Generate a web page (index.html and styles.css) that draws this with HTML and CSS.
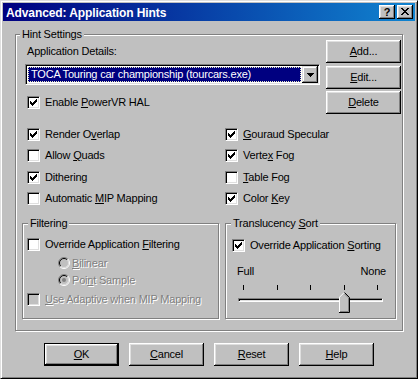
FILE: index.html
```html
<!DOCTYPE html>
<html lang="en">
<head>
  <meta charset="UTF-8">
  <title>Advanced: Application Hints</title>
  <link rel="stylesheet" href="styles.css">
</head>
<body>
<div class="window">
  <div class="titlebar">
    <span class="title">Advanced: Application Hints</span>
    <div class="title-buttons">
      <span class="tbtn">?</span>
      <span class="tbtn">
        <svg width="8" height="7" viewBox="0 0 8 7"><path d="M0 0h2v1H0zM6 0h2v1H6zM1 1h2v1H1zM5 1h2v1H5zM2 2h4v1H2zM3 3h2v1H3zM2 4h4v1H2zM1 5h2v1H1zM5 5h2v1H5zM0 6h2v1H0zM6 6h2v1H6z"/></svg>
      </span>
    </div>
  </div>

  <!-- Hint Settings -->
  <div class="group hint">
    <span class="group-title">Hint Settings</span>
    <div class="top">
      <div class="app">
        <div class="app-label">Application Details:</div>
        <div class="combo">
          <span class="combo-value">TOCA Touring car championship (tourcars.exe)</span>
          <span class="combo-btn"><svg width="7" height="4" viewBox="0 0 7 4"><path d="M0 0h7v1H0zM1 1h5v1H1zM2 2h3v1H2zM3 3h1v1H3z"/></svg></span>
        </div>
        <div class="check pvr"><span class="box"><svg class="tick" viewBox="0 0 7 7"><path d="M0 2h1v3H0zM1 3h1v3H1zM2 4h1v3H2zM3 3h1v3H3zM4 2h1v3H4zM5 1h1v3H5zM6 0h1v3H6z"/></svg></span><span>Enable <u>P</u>owerVR HAL</span></div>
      </div>
      <div class="side-buttons">
        <div class="btn"><span><u>A</u>dd...</span></div>
        <div class="btn"><span><u>E</u>dit...</span></div>
        <div class="btn"><span><u>D</u>elete</span></div>
      </div>
    </div>

    <div class="checks">
      <div class="check"><span class="box"><svg class="tick" viewBox="0 0 7 7"><path d="M0 2h1v3H0zM1 3h1v3H1zM2 4h1v3H2zM3 3h1v3H3zM4 2h1v3H4zM5 1h1v3H5zM6 0h1v3H6z"/></svg></span><span>Render O<u>v</u>erlap</span></div>
      <div class="check"><span class="box"><svg class="tick" viewBox="0 0 7 7"><path d="M0 2h1v3H0zM1 3h1v3H1zM2 4h1v3H2zM3 3h1v3H3zM4 2h1v3H4zM5 1h1v3H5zM6 0h1v3H6z"/></svg></span><span><u>G</u>ouraud Specular</span></div>
      <div class="check"><span class="box"></span><span>Allow <u>Q</u>uads</span></div>
      <div class="check"><span class="box"><svg class="tick" viewBox="0 0 7 7"><path d="M0 2h1v3H0zM1 3h1v3H1zM2 4h1v3H2zM3 3h1v3H3zM4 2h1v3H4zM5 1h1v3H5zM6 0h1v3H6z"/></svg></span><span>Verte<u>x</u> Fog</span></div>
      <div class="check"><span class="box"><svg class="tick" viewBox="0 0 7 7"><path d="M0 2h1v3H0zM1 3h1v3H1zM2 4h1v3H2zM3 3h1v3H3zM4 2h1v3H4zM5 1h1v3H5zM6 0h1v3H6z"/></svg></span><span>Ditherin<u>g</u></span></div>
      <div class="check"><span class="box"></span><span><u>T</u>able Fog</span></div>
      <div class="check"><span class="box"></span><span>Automatic <u>M</u>IP Mapping</span></div>
      <div class="check"><span class="box"><svg class="tick" viewBox="0 0 7 7"><path d="M0 2h1v3H0zM1 3h1v3H1zM2 4h1v3H2zM3 3h1v3H3zM4 2h1v3H4zM5 1h1v3H5zM6 0h1v3H6z"/></svg></span><span>Color <u>K</u>ey</span></div>
    </div>

    <div class="subgroups">
      <!-- Filtering -->
      <div class="group filter">
        <span class="group-title">Filtering</span>
        <div class="check"><span class="box"></span><span>Override Application <u>F</u>iltering</span></div>
        <div class="radio first disabled">
          <svg width="12" height="12" viewBox="0 0 12 12"><circle cx="6" cy="6" r="4.5" fill="#c0c0c0"/><path d="M2.1 9.9A5.5 5.5 0 0 1 9.9 2.1" stroke="#808080" fill="none"/><path d="M2.8 9.2A4.5 4.5 0 0 1 9.2 2.8" stroke="#000" fill="none"/><path d="M9.9 2.1A5.5 5.5 0 0 1 2.1 9.9" stroke="#fff" fill="none"/><path d="M9.2 2.8A4.5 4.5 0 0 1 2.8 9.2" stroke="#dfdfdf" fill="none"/></svg>
          <span><u>B</u>ilinear</span>
        </div>
        <div class="radio disabled">
          <svg width="12" height="12" viewBox="0 0 12 12"><circle cx="6" cy="6" r="4.5" fill="#c0c0c0"/><path d="M2.1 9.9A5.5 5.5 0 0 1 9.9 2.1" stroke="#808080" fill="none"/><path d="M2.8 9.2A4.5 4.5 0 0 1 9.2 2.8" stroke="#000" fill="none"/><path d="M9.9 2.1A5.5 5.5 0 0 1 2.1 9.9" stroke="#fff" fill="none"/><path d="M9.2 2.8A4.5 4.5 0 0 1 2.8 9.2" stroke="#dfdfdf" fill="none"/><circle cx="6" cy="6" r="2" fill="#808080"/></svg>
          <span>Poi<u>n</u>t Sample</span>
        </div>
        <div class="check adaptive disabled"><span class="box"></span><span><u>U</u>se Adaptive when MIP Mapping</span></div>
      </div>

      <!-- Translucency Sort -->
      <div class="group trans">
        <span class="group-title">Translucency <u>S</u>ort</span>
        <div class="check"><span class="box"><svg class="tick" viewBox="0 0 7 7"><path d="M0 2h1v3H0zM1 3h1v3H1zM2 4h1v3H2zM3 3h1v3H3zM4 2h1v3H4zM5 1h1v3H5zM6 0h1v3H6z"/></svg></span><span>Override Application <u>S</u>orting</span></div>
        <div class="slider">
          <div class="slider-labels"><span>Full</span><span>None</span></div>
          <div class="ticks"><i></i><i></i><i></i><i></i><i></i></div>
          <div class="track"></div>
          <svg class="thumb" width="11" height="21" viewBox="0 0 11 21">
            <path d="M5 0L10 5V20H0V5z" fill="#c0c0c0"/>
            <path d="M0.5 20V5.2L5.2 0.5" stroke="#fff" fill="none"/>
            <path d="M5.5 0.5L10.5 5.5V20.5H0" stroke="#000" fill="none"/>
            <path d="M5.5 1.9L9.5 5.9V19.5H1" stroke="#808080" fill="none"/>
          </svg>
        </div>
      </div>
    </div>
  </div>

  <div class="actions">
    <div class="btn default"><span><u>O</u>K</span></div>
    <div class="btn"><span><u>C</u>ancel</span></div>
    <div class="btn"><span><u>R</u>eset</span></div>
    <div class="btn"><span><u>H</u>elp</span></div>
  </div>
</div>
</body>
</html>
```

FILE: styles.css
```css
* {
  margin: 0;
  padding: 0;
  box-sizing: border-box;
}
body {
  background: #c0c0c0;
  font-family: "Liberation Sans", Arial, sans-serif;
  font-size: 11px;
  letter-spacing: -0.2px;
  color: #000;
  overflow: hidden;
}
u {
  text-decoration: underline;
  text-underline-offset: 1px;
}

/* Окно */
.window {
  width: 418px;
  height: 379px;
  background: #c0c0c0;
  border: 1px solid;
  border-color: #dfdfdf #000 #000 #dfdfdf;
  box-shadow: inset 1px 1px #fff, inset -1px -1px #808080;
  padding: 2px;
}
.titlebar {
  height: 18px;
  display: flex;
  align-items: center;
  justify-content: space-between;
  padding: 0 2px 0 3px;
  background: linear-gradient(90deg, #000080, #1084d0);
}
.title {
  color: #fff;
  font-weight: bold;
  font-size: 12px;
  letter-spacing: -0.1px;
  line-height: 14px;
  padding-top: 1px;
}
.title-buttons {
  display: flex;
  gap: 2px;
}
.tbtn {
  width: 16px;
  height: 14px;
  display: flex;
  align-items: center;
  justify-content: center;
  background: #c0c0c0;
  font-weight: bold;
  font-size: 11px;
  line-height: 14px;
  box-shadow: inset -1px -1px #000, inset 1px 1px #fff, inset -2px -2px #808080, inset 2px 2px #dfdfdf;
}
.tbtn svg {
  display: block;
  margin-top: -1px;
}

/* Рамки групп */
.group {
  position: relative;
  border: 1px solid #808080;
  box-shadow: inset 1px 1px #fff, 1px 1px #fff;
}
.group-title {
  position: absolute;
  top: -7px;
  left: 4px;
  padding: 0 2px;
  line-height: 13px;
  background: #c0c0c0;
}
.hint {
  margin: 13px 12px 0;
  padding-bottom: 11px;
}
.filter .group-title,
.trans .group-title {
  left: 5px;
}

/* Верхняя часть */
.top {
  display: grid;
  grid-template-columns: 1fr 75px;
  column-gap: 6px;
  padding: 5px 1px 0 11px;
}
.app-label {
  margin-top: 5px;
  line-height: 13px;
}
.combo {
  margin: 6px 0 0 -2px;
  height: 21px;
  display: flex;
  background: #fff;
  border: 1px solid;
  border-color: #808080 #fff #fff #808080;
  box-shadow: inset 1px 1px #000, inset -1px -1px #dfdfdf;
  padding: 1px;
}
.combo-value {
  flex: 1;
  margin: 1px;
  background: #000080;
  color: #fff;
  line-height: 13px;
  padding-left: 2px;
  border: 1px dotted #e8e8c0;
  white-space: nowrap;
  overflow: hidden;
}
.combo-btn {
  width: 16px;
  height: 17px;
  display: flex;
  align-items: center;
  justify-content: center;
  background: #c0c0c0;
  box-shadow: inset -1px -1px #000, inset 1px 1px #dfdfdf, inset -2px -2px #808080, inset 2px 2px #fff;
}
.combo-btn svg {
  display: block;
}
.side-buttons {
  display: flex;
  flex-direction: column;
  gap: 2.5px;
}

/* Кнопки */
.btn {
  width: 75px;
  height: 23px;
  display: flex;
  align-items: center;
  justify-content: center;
  background: #c0c0c0;
  line-height: 13px;
  box-shadow: inset -1px -1px #000, inset 1px 1px #fff, inset -2px -2px #808080, inset 2px 2px #dfdfdf;
}
.btn.default {
  border: 1px solid #000;
}

/* Флажки */
.check {
  display: flex;
  align-items: center;
  height: 13px;
  line-height: 13px;
  white-space: nowrap;
}
.box {
  width: 13px;
  height: 13px;
  flex: none;
  margin-right: 5px;
  background: #fff;
  border: 1px solid;
  border-color: #808080 #fff #fff #808080;
  box-shadow: inset 1px 1px #000, inset -1px -1px #dfdfdf;
}
.tick {
  display: block;
  width: 7px;
  height: 7px;
  margin: 2px;
  shape-rendering: crispEdges;
}
.pvr {
  margin-top: 11px;
}
.checks {
  display: grid;
  grid-template-columns: 198px 1fr;
  grid-auto-rows: 13px;
  row-gap: 8.33px;
  margin-top: 14px;
  padding-left: 11px;
}

/* Нижние группы */
.subgroups {
  display: grid;
  grid-template-columns: 197px 1fr;
  column-gap: 6px;
  margin-top: 18px;
  padding: 0 6px;
}
.filter,
.trans {
  height: 96px;
}
.filter {
  padding: 14px 0 0 4px;
}
.disabled {
  color: #808080;
  text-shadow: 1px 1px #fff;
}
.disabled .box {
  background: #c0c0c0;
}
.radio {
  display: flex;
  align-items: center;
  height: 13px;
  line-height: 13px;
  margin: 4px 0 0 31px;
}
.radio.first {
  margin-top: 6px;
}
.radio svg {
  display: block;
  flex: none;
  margin-right: 2px;
}
.adaptive {
  margin-top: 6px;
}
.trans {
  padding-top: 15px;
}
.trans .check {
  margin-left: 6px;
}

/* Ползунок */
.slider {
  position: relative;
}
.slider-labels {
  display: flex;
  justify-content: space-between;
  margin-top: 13px;
  padding: 0 9px 0 11px;
  line-height: 13px;
}
.ticks {
  display: flex;
  justify-content: space-between;
  margin-top: 7px;
  padding: 0 17px;
  height: 5px;
}
.ticks i {
  width: 1px;
  height: 5px;
  background: #000;
}
.track {
  margin: 8px 12px 0;
  height: 4px;
  border: 1px solid;
  border-color: #808080 #fff #fff #808080;
  box-shadow: inset 1px 1px #000, inset -1px -1px #dfdfdf;
}
.thumb {
  position: absolute;
  left: 113px;
  top: 27px;
}

/* Кнопки диалога */
.actions {
  display: flex;
  justify-content: center;
  gap: 10px;
  margin-top: 12px;
}
```
